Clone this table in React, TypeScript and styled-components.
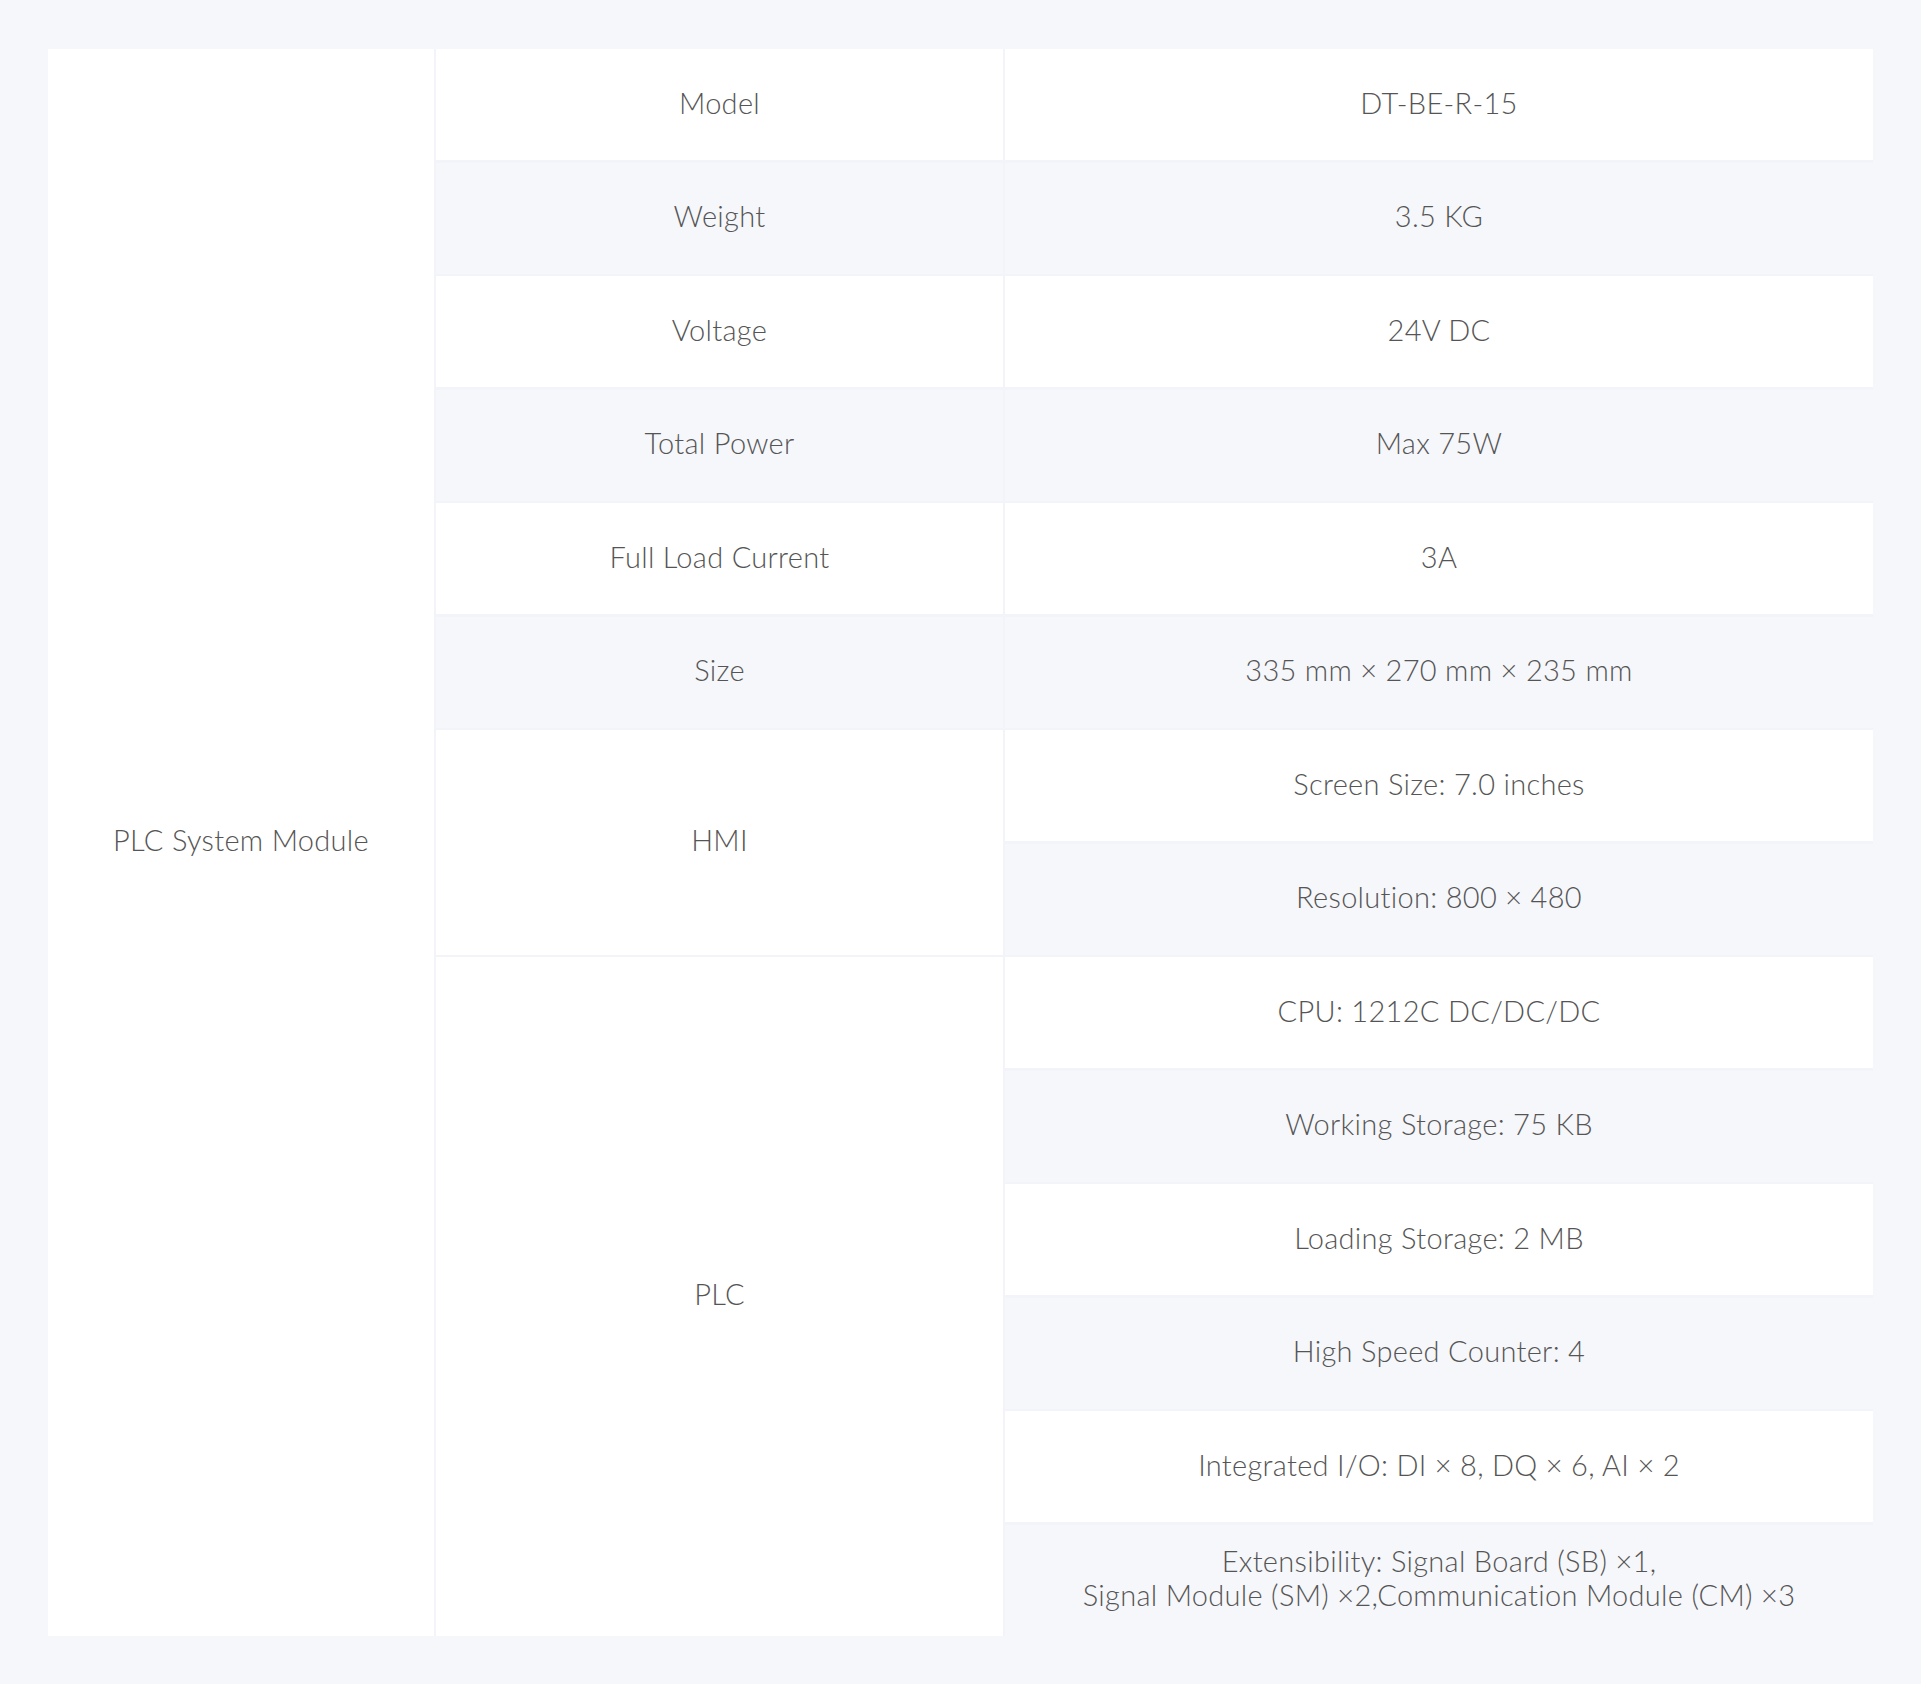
import * as React from 'react';
import styled, { createGlobalStyle } from 'styled-components';

interface Spec {
  label: string;
  values: string[];
}

const specs: Spec[] = [
  { label: 'Model', values: ['DT-BE-R-15'] },
  { label: 'Weight', values: ['3.5 KG'] },
  { label: 'Voltage', values: ['24V DC'] },
  { label: 'Total Power', values: ['Max 75W'] },
  { label: 'Full Load Current', values: ['3A'] },
  { label: 'Size', values: ['335 mm × 270 mm × 235 mm'] },
  { label: 'HMI', values: ['Screen Size: 7.0 inches', 'Resolution: 800 × 480'] },
  {
    label: 'PLC',
    values: [
      'CPU: 1212C DC/DC/DC',
      'Working Storage: 75 KB',
      'Loading Storage: 2 MB',
      'High Speed Counter: 4',
      'Integrated I/O: DI × 8, DQ × 6, AI × 2',
      'Extensibility: Signal Board (SB) ×1,\nSignal Module (SM) ×2,Communication Module (CM) ×3',
    ],
  },
];

const GlobalStyle = createGlobalStyle`
  html, body {
    margin: 0;
    padding: 0;
    background: #f6f7fb;
  }
`;

const Page = styled.div`
  padding: 49px 48px 48px 48px;
  font-family: Lato, 'Noto Sans', sans-serif;
  font-weight: 300;
`;

const Table = styled.div`
  display: grid;
  grid-template-columns: 386px 567px 868px;
  grid-auto-rows: 111px;
  column-gap: 2px;
  row-gap: 2.5px;
  width: 1825px;
  background: #f3f4f9;
`;

const Cell = styled.div<{ $row: number; $span: number; $col: number; $shaded?: boolean }>`
  grid-column: ${(p) => p.$col};
  grid-row: ${(p) => p.$row} / span ${(p) => p.$span};
  display: flex;
  align-items: center;
  justify-content: center;
  padding-bottom: 4px;
  text-align: center;
  background: ${(p) => (p.$shaded ? '#f6f7fb' : '#ffffff')};
  color: #555555;
  font-size: 29px;
  line-height: 34px;
  letter-spacing: 0.3px;
  white-space: pre-line;
`;

const App: React.FC = () => {
  let row = 1;
  const cells: React.ReactNode[] = [];
  const total = specs.reduce((n, s) => n + s.values.length, 0);

  specs.forEach((spec) => {
    const span = spec.values.length;
    cells.push(
      <Cell key={spec.label} $col={2} $row={row} $span={span} $shaded={span === 1 && row % 2 === 0}>
        {spec.label}
      </Cell>
    );
    spec.values.forEach((value, i) => {
      const r = row + i;
      cells.push(
        <Cell key={value} $col={3} $row={r} $span={1} $shaded={r % 2 === 0}>
          {value}
        </Cell>
      );
    });
    row += span;
  });

  return (
    <>
      <GlobalStyle />
      <Page>
        <Table>
          <Cell $col={1} $row={1} $span={total}>
            PLC System Module
          </Cell>
          {cells}
        </Table>
      </Page>
    </>
  );
};

export default App;
